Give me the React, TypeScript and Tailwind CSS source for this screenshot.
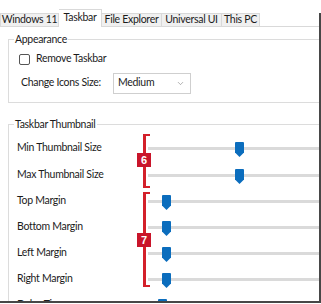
import { ChevronDown } from "lucide-react";

const tabs = [
  { name: "Windows 11", w: "w-[59px] border-l", active: false },
  { name: "Taskbar", w: "w-[43px]", active: true },
  { name: "File Explorer", w: "w-[60px]", active: false },
  { name: "Universal UI", w: "w-[60px]", active: false },
  { name: "This PC", w: "w-[38px]", active: false },
];

const rows = [
  { label: "Min Thumbnail Size", thumb: "left-[87px]", h: "h-[28px]" },
  { label: "Max Thumbnail Size", thumb: "left-[87px]", h: "h-[26px]" },
  { label: "Top Margin", thumb: "left-[14px]", h: "h-[26px]" },
  { label: "Bottom Margin", thumb: "left-[14px]", h: "h-[26px]" },
  { label: "Left Margin", thumb: "left-[14px]", h: "h-[26px]" },
  { label: "Right Margin", thumb: "left-[14px]", h: "h-[26px]" },
  { label: "Delay Time", thumb: "left-[10px]", h: "h-[26px]" },
];

const Thumb = ({ pos }: { pos: string }) => (
  <svg
    width="9"
    height="15"
    viewBox="0 0 9 15"
    className={`absolute top-[calc(50%-6px)] ${pos}`}
  >
    <path d="M1 0H8Q9 0 9 1V10.5L4.5 15L0 10.5V1Q0 0 1 0Z" fill="#0b6dbd" />
  </svg>
);

const Bracket = ({ box, badge, num }: { box: string; badge: string; num: string }) => (
  <>
    <div className={`absolute left-[143px] w-[7px] border-l-[3px] border-y-2 border-[#d3202a] ${box}`} />
    <div
      className={`absolute left-[137px] w-[14px] h-[14px] bg-[#c9152a] text-white text-[11px] font-bold leading-[14px] text-center font-['Liberation_Sans',sans-serif] ${badge}`}
    >
      {num}
    </div>
  </>
);

export default function App() {
  return (
    <div className="relative w-[321px] h-[304px] bg-white overflow-hidden font-['Lato',sans-serif] text-[10.5px] tracking-[-0.3px] text-[#1b1b1b] whitespace-nowrap">
      <div className="flex h-[301px]">
        <div className="w-[319px] h-full overflow-hidden flex flex-col">
          {/* tabs */}
          <div className="h-[27px] shrink-0 flex items-end border-b border-[#d9d9d9]">
            {tabs.map((t) =>
              t.active ? (
                <div
                  key={t.name}
                  className={`${t.w} h-[18px] -mb-px bg-white border-t border-r border-[#d9d9d9] flex items-center justify-center pb-[2px]`}
                >
                  {t.name}
                </div>
              ) : (
                <div
                  key={t.name}
                  className={`${t.w} h-[13px] bg-[#f0f0f0] border-t border-r border-[#d9d9d9] flex items-center justify-center`}
                >
                  {t.name}
                </div>
              )
            )}
          </div>

          {/* Appearance */}
          <fieldset className="mt-[5px] ml-[8px] w-[340px] shrink-0 border border-[#dcdcdc] pl-[5px] pb-[8px]">
            <legend className="px-px leading-[14px]">Appearance</legend>
            <div className="h-[26px] flex items-center">
              <div className="ml-[5px] w-[11px] h-[11px] rounded-[2px] border border-[#555] bg-white" />
              <span className="ml-[6px]">Remove Taskbar</span>
            </div>
            <div className="h-[22px] flex items-center">
              <span className="ml-[7px] w-[92px]">Change Icons Size:</span>
              <div className="w-[78px] h-[21px] border border-[#cfcfcf] flex items-center justify-between pl-[4px] pr-[5px]">
                <span>Medium</span>
                <ChevronDown size={9} strokeWidth={1.5} color="#777" />
              </div>
            </div>
          </fieldset>

          {/* Taskbar Thumbnail */}
          <fieldset className="mt-[14px] ml-[8px] w-[340px] shrink-0 border border-[#dcdcdc] pl-[5px] pt-[3px]">
            <legend className="px-px leading-[14px]">Taskbar Thumbnail</legend>
            {rows.map((r) => (
              <div key={r.label} className={`${r.h} flex items-center`}>
                <span className="ml-[3px] w-[131px] shrink-0">{r.label}</span>
                <div className="relative flex-1 h-full flex items-center">
                  <div className="w-full h-[3px] bg-[#dadada]" />
                  <Thumb pos={r.thumb} />
                </div>
              </div>
            ))}
          </fieldset>
        </div>
        <div className="w-[2px] h-full flex flex-col">
          <div className="h-[13px] bg-white" />
          <div className="flex-1 bg-[#474747]" />
        </div>
      </div>
      <div className="h-[2px] bg-[#474747]" />

      <Bracket box="top-[134px] h-[54px]" badge="top-[153px]" num="6" />
      <Bracket box="top-[192px] h-[95px]" badge="top-[233px]" num="7" />
    </div>
  );
}
